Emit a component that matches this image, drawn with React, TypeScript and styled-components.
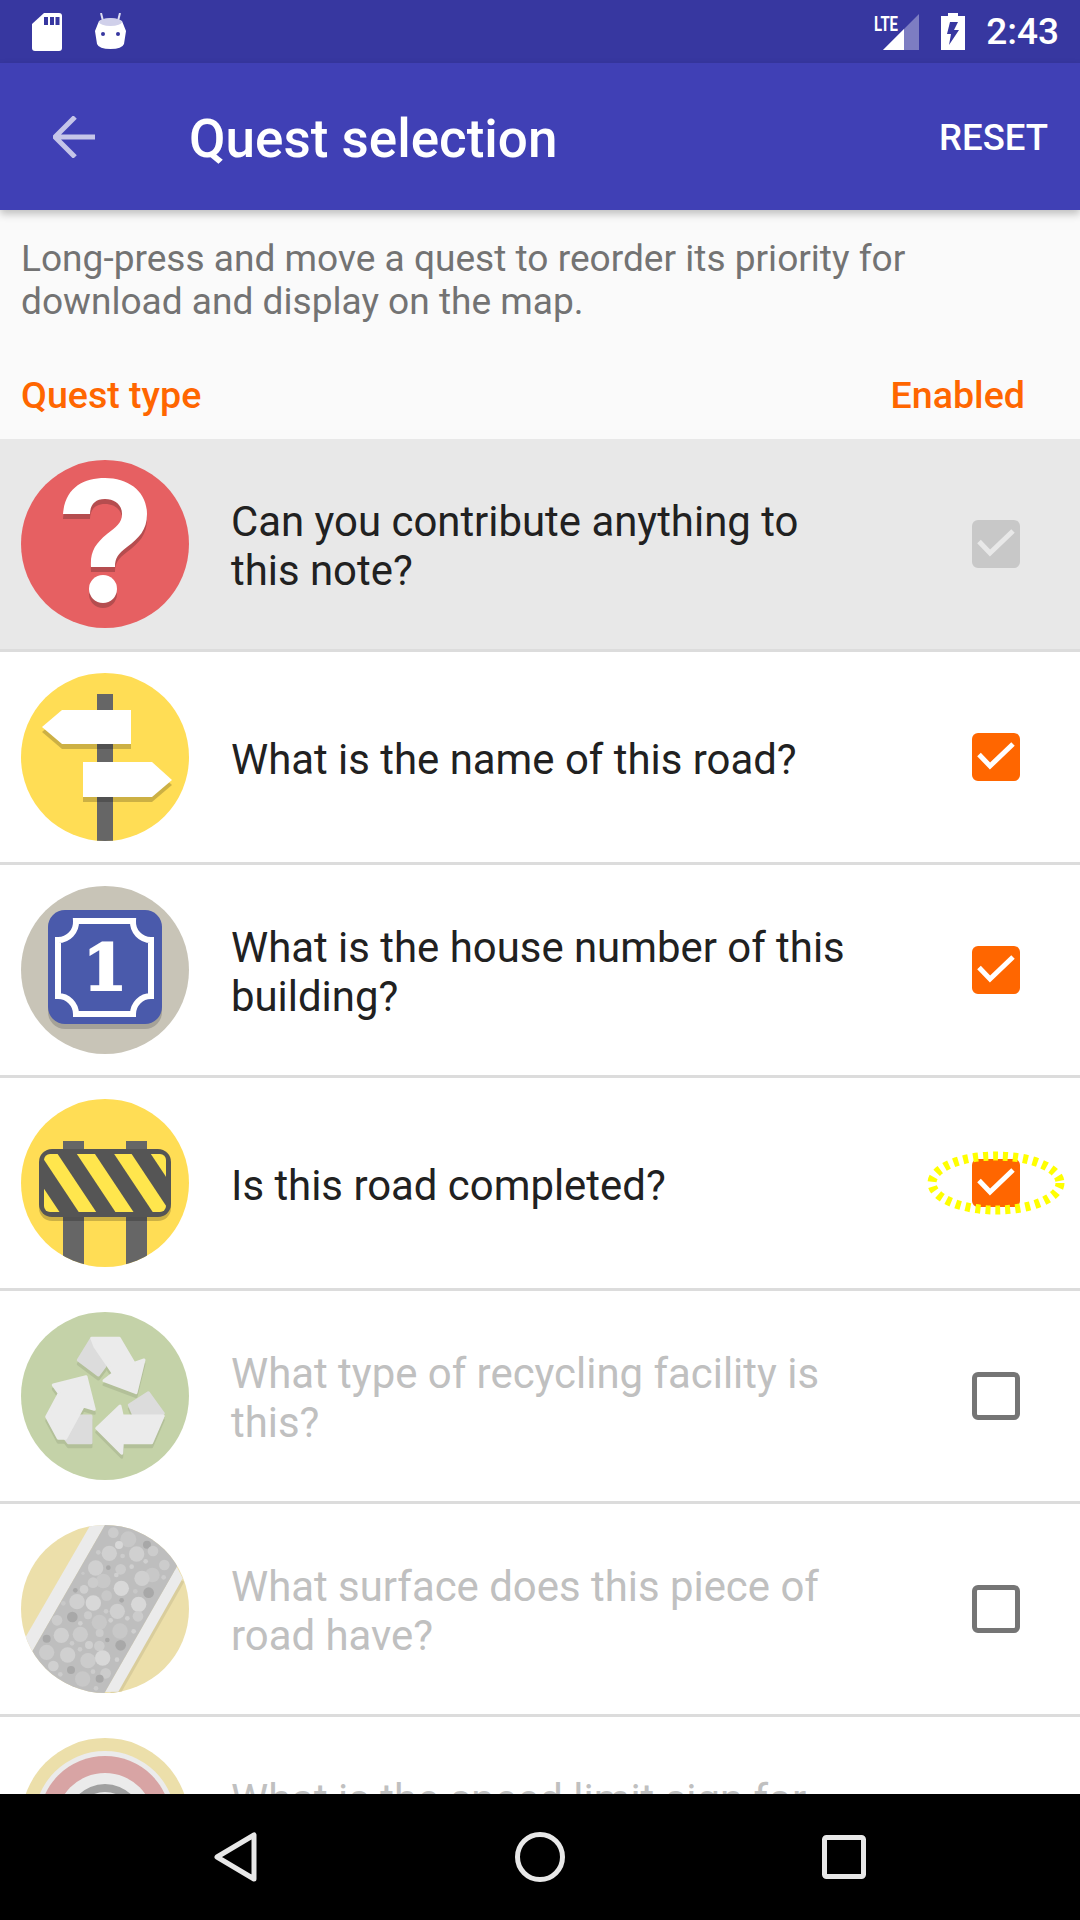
import React, {FC} from 'react';
import styled, {createGlobalStyle} from "styled-components";

const GlobalStyle = createGlobalStyle`
  html, body {
    margin: 0;
    padding: 0;
    background: #fafafa;
  }

  body {
    font-family: Roboto, "Liberation Sans", sans-serif;
  }
`

const Screen = styled.div`
  width: 1080px;
  height: 1920px;
  display: flex;
  flex-direction: column;
  overflow: hidden;
  background: #fafafa;
`

const StatusBar = styled.div`
  height: 63px;
  flex-shrink: 0;
  background: #3737a0;
  display: flex;
  align-items: center;
  padding: 0 21px 0 32px;
  color: #fff;
`

const StatusLeft = styled.div`
  display: flex;
  align-items: center;
  gap: 33px;
  flex: 1;
`

const StatusRight = styled.div`
  display: flex;
  align-items: center;
`

const BatteryIcon = styled.svg`
  margin-left: 22px;
`

const Clock = styled.span`
  font-size: 37px;
  font-weight: 500;
  margin-left: 21px;
  line-height: 63px;
`

const AppBar = styled.header`
  position: relative;
  z-index: 2;
  height: 147px;
  flex-shrink: 0;
  background: #4040b5;
  box-shadow: 0 4px 8px rgba(0, 0, 0, 0.24);
  display: flex;
  align-items: center;
  padding: 0 32px 0 53px;
  color: #fff;
`

const Title = styled.h1`
  margin: 0 0 0 94px;
  padding-top: 4px;
  flex: 1;
  font-size: 53px;
  font-weight: 500;
`

const ResetButton = styled.span`
  padding-top: 2px;
  font-size: 36.5px;
  font-weight: 500;
`

const Intro = styled.div`
  height: 229px;
  flex-shrink: 0;
  box-sizing: border-box;
  padding: 27px 21px 0;
  display: flex;
  flex-direction: column;
`

const IntroText = styled.p`
  margin: 0;
  font-size: 37.1px;
  line-height: 43px;
  color: #737373;
`

const ColumnHeads = styled.div`
  display: flex;
  justify-content: space-between;
  margin-top: 51px;
  padding-right: 34px;
  font-size: 37.6px;
  line-height: 43px;
  font-weight: 500;
  color: #ff6600;
`

const List = styled.div`
  flex: 1;
  min-height: 0;
  overflow: hidden;
  background: #fff;
`

const Row = styled.div<{ $locked?: boolean }>`
  height: 213px;
  box-sizing: border-box;
  border-bottom: 3px solid #dcdcdc;
  display: flex;
  align-items: center;
  padding: 0 22px 0 21px;
  background: ${p => (p.$locked ? '#e8e8e8' : '#fff')};
`

const IconWrap = styled.div`
  width: 168px;
  height: 168px;
  flex-shrink: 0;

  svg {
    display: block;
  }
`

const Question = styled.div<{ $disabled?: boolean }>`
  flex: 1;
  margin-left: 42px;
  padding: 4px 111px 0 0;
  font-size: 41.9px;
  line-height: 49px;
  color: ${p => (p.$disabled ? '#c0c0c0' : '#212121')};
`

const CheckSlot = styled.div`
  position: relative;
  width: 48px;
  height: 48px;
  margin-right: 38px;
  flex-shrink: 0;
`

const CheckBox = styled.div<{ $state: 'on' | 'off' | 'locked' }>`
  width: 48px;
  height: 48px;
  box-sizing: border-box;
  border-radius: 6px;
  background: ${p => (p.$state === 'on' ? '#ff6600' : p.$state === 'locked' ? '#c8c8c8' : 'transparent')};
  border: ${p => (p.$state === 'off' ? '5px solid #757575' : 'none')};

  svg {
    display: block;
  }
`

const Highlight = styled.svg`
  position: absolute;
  left: -47px;
  top: -9px;
`

const NavBar = styled.nav`
  height: 126px;
  flex-shrink: 0;
  background: #000;
  display: flex;
  align-items: center;
  justify-content: center;
`

const NavSlot = styled.div`
  width: 304px;
  display: flex;
  justify-content: center;
`

const Tick: FC<{ color: string }> = ({color}) => (
    <svg width="48" height="48" viewBox="0 0 48 48">
        <path d="M7 21.500 L18 33 L41 11" fill="none" stroke={color} strokeWidth="5"/>
    </svg>
)

const questionMark = "M42 54 C44 28 62 18 84 18 C108 18 126 32 126 54 C126 70 118 78 106 87 C97 94 94 98 94 107 L70 107 C69 92 74 84 86 74 C95 67 101 63 101 54 C101 45 94 39 84 39 C73 39 69 46 69 54 Z"

const NoteIcon: FC = () => (
    <svg width="168" height="168" viewBox="0 0 168 168">
        <circle cx="84" cy="84" r="84" fill="#e66062"/>
        <g fill="#b54d4f" transform="translate(0 5)">
            <path d={questionMark}/>
            <circle cx="82" cy="129" r="14"/>
        </g>
        <g fill="#fff">
            <path d={questionMark}/>
            <circle cx="82" cy="129" r="14"/>
        </g>
    </svg>
)

const RoadNameIcon: FC = () => (
    <svg width="168" height="168" viewBox="0 0 168 168">
        <defs>
            <clipPath id="signClip"><circle cx="84" cy="84" r="84"/></clipPath>
        </defs>
        <circle cx="84" cy="84" r="84" fill="#ffdd55"/>
        <g clipPath="url(#signClip)">
            <rect x="76" y="21" width="16" height="147" fill="#666"/>
            <path d="M21 54 L41 37 L110 37 L110 71 L41 71 Z" fill="#000" opacity="0.2" transform="translate(0 5)"/>
            <path d="M62 89 L131 89 L151 107 L131 124 L62 124 Z" fill="#000" opacity="0.2" transform="translate(0 5)"/>
            <path d="M21 54 L41 37 L110 37 L110 71 L41 71 Z" fill="#fff"/>
            <path d="M62 89 L131 89 L151 107 L131 124 L62 124 Z" fill="#fff"/>
        </g>
    </svg>
)

const HouseNumberIcon: FC = () => (
    <svg width="168" height="168" viewBox="0 0 168 168">
        <circle cx="84" cy="84" r="84" fill="#c8c4b7"/>
        <rect x="27" y="29" width="114" height="114" rx="17" fill="#a5a298"/>
        <rect x="27" y="24" width="114" height="114" rx="17" fill="#4a5aab"/>
        <path d="M55 35 L112 35 A18 18 0 0 0 130 54 L130 110 A18 18 0 0 0 112 128 L55 128 A18 18 0 0 0 37 110 L37 54 A18 18 0 0 0 55 35 Z"
              fill="none" stroke="#fff" strokeWidth="6"/>
        <text x="84" y="104" textAnchor="middle" fontFamily="'DejaVu Serif', serif" fontWeight="700" fontSize="64"
              fill="#fff" stroke="#fff" strokeWidth="2">1</text>
    </svg>
)

const barrierStripes = [9, 45.7, 83, 119.7]

const ConstructionIcon: FC = () => (
    <svg width="168" height="168" viewBox="0 0 168 168">
        <defs>
            <clipPath id="barrierClip"><circle cx="84" cy="84" r="84"/></clipPath>
            <clipPath id="boardClip"><rect x="23" y="55" width="122" height="58" rx="6"/></clipPath>
        </defs>
        <circle cx="84" cy="84" r="84" fill="#ffdd55"/>
        <g clipPath="url(#barrierClip)">
            <rect x="42" y="42" width="21" height="126" fill="#666"/>
            <rect x="105" y="42" width="21" height="126" fill="#666"/>
        </g>
        <rect x="18" y="54" width="132" height="68" rx="13" fill="#000" opacity="0.2"/>
        <rect x="18" y="50" width="132" height="68" rx="13" fill="#555"/>
        <rect x="23" y="55" width="122" height="58" rx="6" fill="#ffe64d"/>
        <g clipPath="url(#boardClip)" stroke="#555" strokeWidth="16">
            {barrierStripes.map(x => (
                <path key={x} d={`M${x - 38} -3 L${x + 77} 170`}/>
            ))}
        </g>
    </svg>
)

const recycleBands = [
    "M70.7 26.3 L98.3 26.3 L113 51.3 L123 48 L115 80.7 L83 68.7 L92.3 61.3 L74 34.7 Z",
    "M32.3 73 L65 64.7 L73.3 97.3 L62.3 94 L44.7 126.3 L37.3 126.3 L25.7 104.7 L38.3 81.3 Z",
    "M75.7 116.3 L99 94 L101.3 104 L142.3 104 L130.7 130.7 L101.3 130.7 L100.7 141.3 Z",
]

const recycleFolds = [
    "M70.7 26.3 L57.3 48 L77.3 63 L84 54 Z",
    "M58 104 L70 104 L70 130.7 L47.3 130.7 L44 126.3 Z",
    "M108.3 93 L127.3 80.7 L142.3 101.3 L139 104 L113 104 Z",
]

const RecyclingIcon: FC = () => (
    <svg width="168" height="168" viewBox="0 0 168 168">
        <circle cx="84" cy="84" r="84" fill="#c4d2a8"/>
        <g fill="#b3c099" stroke="#b3c099" strokeWidth="3" strokeLinejoin="round" transform="translate(0 4)">
            {[...recycleBands, ...recycleFolds].map(d => <path key={d} d={d}/>)}
        </g>
        <g fill="#dcdcdc" stroke="#dcdcdc" strokeWidth="3" strokeLinejoin="round">
            {recycleFolds.map(d => <path key={d} d={d}/>)}
        </g>
        <g fill="#ebebeb" stroke="#ebebeb" strokeWidth="3" strokeLinejoin="round">
            {recycleBands.map(d => <path key={d} d={d}/>)}
        </g>
    </svg>
)

const L = '#d0d0d0', W = '#d8d8d8', F = '#c8c8c8', D = '#a8a8a8', M = '#cccccc'

// x, y, r in pixels of a 3x crop, the group below scales them back
const asphaltDots: [number, number, number, string][] = [
    [340, 98, 16, M], [385, 118, 24, F], [357, 135, 12, W], [441, 134, 12, D], [295, 157, 7, M],
    [328, 160, 23, L], [368, 168, 7, M], [410, 162, 23, L], [459, 153, 16, M], [437, 184, 7, L],
    [493, 195, 16, M], [287, 204, 23, L], [325, 203, 7, D], [362, 208, 16, M], [395, 200, 7, L],
    [457, 225, 22, F], [426, 235, 23, L], [349, 225, 7, L], [491, 232, 7, M], [310, 243, 22, F],
    [279, 248, 16, M], [249, 220, 5, F], [252, 268, 13, L], [226, 271, 7, D], [364, 265, 23, W],
    [406, 274, 7, F], [446, 278, 16, D], [320, 287, 16, F], [231, 305, 23, L], [280, 309, 23, W],
    [365, 301, 7, D], [416, 313, 23, W], [190, 310, 7, F], [352, 334, 23, L], [318, 334, 7, M],
    [217, 351, 16, D], [264, 346, 12, M], [414, 349, 16, M], [382, 355, 7, L], [171, 361, 16, M],
    [332, 361, 7, L], [298, 367, 23, F], [241, 370, 7, L], [184, 406, 23, L], [241, 403, 23, M],
    [360, 393, 23, F], [299, 399, 12, M], [401, 394, 7, L], [140, 416, 12, D], [322, 420, 7, D],
    [216, 430, 7, M], [267, 435, 12, L], [298, 438, 16, M], [362, 436, 16, D], [240, 448, 7, M],
    [140, 457, 23, M], [203, 465, 23, L], [264, 482, 23, M], [308, 474, 23, W], [351, 479, 7, L],
    [160, 498, 16, L], [181, 523, 7, M], [213, 510, 12, D], [279, 515, 7, M], [317, 520, 16, M],
    [248, 537, 23, F], [299, 536, 12, D], [288, 565, 7, M],
]

const SurfaceIcon: FC = () => (
    <svg width="168" height="168" viewBox="0 0 168 168">
        <defs>
            <clipPath id="surfaceClip"><circle cx="84" cy="84" r="84"/></clipPath>
        </defs>
        <circle cx="84" cy="84" r="84" fill="#ecdfaa"/>
        <g clipPath="url(#surfaceClip)">
            <path d="M163.3 56.7 L101.7 165 L92 182 L82 182 L150 50 Z" fill="#d9cd9c"/>
            <path d="M70 -1 L92 -14 L-12 167 L-4 127 Z" fill="#ebebeb"/>
            <path d="M155.7 41.7 L161.7 53.3 L97.3 166.7 L84 167 Z" fill="#ebebeb"/>
            <path d="M92 -14 L186 -11 L64 202 L-12 167 Z" fill="#bebebe"/>
            <g transform="translate(-21 -25) scale(0.3333)">
                {asphaltDots.map(([x, y, r, c]) => (
                    <circle key={`${x}-${y}`} cx={x} cy={y} r={r} fill={c}/>
                ))}
            </g>
        </g>
    </svg>
)

const SpeedIcon: FC = () => (
    <svg width="168" height="168" viewBox="0 0 168 168">
        <circle cx="84" cy="84" r="84" fill="#ecdfaa"/>
        <circle cx="84" cy="84" r="71" fill="#ebebeb"/>
        <circle cx="84" cy="84" r="66" fill="#d8a4a4"/>
        <circle cx="84" cy="84" r="49" fill="#ebebeb"/>
        <circle cx="84" cy="84" r="38" fill="#a0a0a0"/>
        <circle cx="84" cy="84" r="30" fill="#ebebeb"/>
    </svg>
)

type Quest = {
    icon: FC,
    text: string,
    state: 'on' | 'off' | 'locked',
    marked?: boolean,
}

const quests: Quest[] = [
    {icon: NoteIcon, text: 'Can you contribute anything to this note?', state: 'locked'},
    {icon: RoadNameIcon, text: 'What is the name of this road?', state: 'on'},
    {icon: HouseNumberIcon, text: 'What is the house number of this building?', state: 'on'},
    {icon: ConstructionIcon, text: 'Is this road completed?', state: 'on', marked: true},
    {icon: RecyclingIcon, text: 'What type of recycling facility is this?', state: 'off'},
    {icon: SurfaceIcon, text: 'What surface does this piece of road have?', state: 'off'},
    {icon: SpeedIcon, text: 'What is the speed limit sign for this road?', state: 'off'},
]

const App: FC = () => {
    return (
        <Screen>
            <GlobalStyle/>
            <StatusBar>
                <StatusLeft>
                    <svg width="30" height="38" viewBox="0 0 30 38">
                        <path d="M12 0 L27 0 Q30 0 30 3 L30 35 Q30 38 27 38 L3 38 Q0 38 0 35 L0 11 Z" fill="#fff"/>
                        <rect x="12" y="4" width="4" height="8" fill="#3737a0"/>
                        <rect x="18" y="4" width="4" height="8" fill="#3737a0"/>
                        <rect x="23.500" y="4" width="4" height="8" fill="#3737a0"/>
                    </svg>
                    <svg width="31" height="37" viewBox="0 0 31 37">
                        <path d="M8 8 L6 0 M23 8 L25 0" stroke="#dcdcf0" strokeWidth="2"/>
                        <path d="M4 8 Q15.500 3 27 8 L31 18 L29 31 Q27 36 15.500 36 Q4 36 2 31 L0 18 Z" fill="#fff"/>
                        <ellipse cx="15.500" cy="9" rx="11.500" ry="4" fill="#d0d0ea"/>
                        <circle cx="8" cy="21" r="2" fill="#3737a0"/>
                        <circle cx="23" cy="21" r="2" fill="#3737a0"/>
                    </svg>
                </StatusLeft>
                <StatusRight>
                    <svg width="45" height="44" viewBox="0 0 45 44">
                        <path d="M9 40 L45 4 L45 40 Z" fill="#7d7dc2"/>
                        <path d="M9 40 L30 19 L30 40 Z" fill="#fff"/>
                        <text x="0" y="21" fontFamily="Roboto, sans-serif" fontWeight="700" fontSize="21" fill="#fff"
                              textLength="24" lengthAdjust="spacingAndGlyphs">LTE</text>
                    </svg>
                    <BatteryIcon width="24" height="37" viewBox="0 0 24 37">
                        <path d="M7 0 L17 0 L17 3 L24 3 L24 37 L0 37 L0 3 L7 3 Z" fill="#fff"/>
                        <path d="M9 9 L17 9 L13 17 L18 17 L8 32 L10 21 L6 21 Z" fill="#3737a0"/>
                    </BatteryIcon>
                    <Clock>2:43</Clock>
                </StatusRight>
            </StatusBar>
            <AppBar>
                <svg width="42" height="42" viewBox="0 0 42 42">
                    <path d="M42 21 L3 21 M22 1 L2 21 L22 41" fill="none" stroke="#c5c5e9" strokeWidth="5"/>
                </svg>
                <Title>Quest selection</Title>
                <ResetButton>RESET</ResetButton>
            </AppBar>
            <Intro>
                <IntroText>Long-press and move a quest to reorder its priority for download and display on the map.</IntroText>
                <ColumnHeads>
                    <span>Quest type</span>
                    <span>Enabled</span>
                </ColumnHeads>
            </Intro>
            <List>
                {quests.map(q => {
                    const Icon = q.icon
                    return (
                        <Row key={q.text} $locked={q.state === 'locked'}>
                            <IconWrap><Icon/></IconWrap>
                            <Question $disabled={q.state === 'off'}>{q.text}</Question>
                            <CheckSlot>
                                <CheckBox $state={q.state}>
                                    {q.state !== 'off' && <Tick color={q.state === 'on' ? '#fff' : '#e8e8e8'}/>}
                                </CheckBox>
                                {q.marked && (
                                    <Highlight width="142" height="66" viewBox="0 0 142 66">
                                        <ellipse cx="71" cy="33" rx="64" ry="27" fill="none" stroke="#ffff00"
                                                 strokeWidth="9" strokeDasharray="5 5"/>
                                    </Highlight>
                                )}
                            </CheckSlot>
                        </Row>
                    )
                })}
            </List>
            <NavBar>
                <NavSlot>
                    <svg width="44" height="50" viewBox="0 0 44 50">
                        <path d="M40 3 L40 47 L3 25 Z" fill="none" stroke="#e8e8e8" strokeWidth="5" strokeLinejoin="round"/>
                    </svg>
                </NavSlot>
                <NavSlot>
                    <svg width="50" height="50" viewBox="0 0 50 50">
                        <circle cx="25" cy="25" r="22.500" fill="none" stroke="#e8e8e8" strokeWidth="5"/>
                    </svg>
                </NavSlot>
                <NavSlot>
                    <svg width="44" height="44" viewBox="0 0 44 44">
                        <rect x="2.500" y="2.500" width="39" height="39" rx="2" fill="none" stroke="#e8e8e8" strokeWidth="5"/>
                    </svg>
                </NavSlot>
            </NavBar>
        </Screen>
    );
};

export default App;
